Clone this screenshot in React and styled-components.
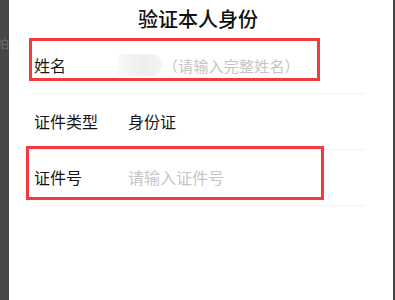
import React from "react";
import styled, { createGlobalStyle } from "styled-components";

const Global = createGlobalStyle`
  html, body { margin: 0; padding: 0; background: #474747; }
  * { box-sizing: border-box; }
  body { font-family: "Noto Sans CJK SC", "Noto Sans", sans-serif; }
`;

const Page = styled.div`
  position: relative;
  display: flex;
  width: 395px;
  height: 300px;
  overflow: hidden;
  background: #474747;
`;

const SideStrip = styled.div`
  width: 9px;
  flex: none;
  overflow: hidden;
  display: flex;
  justify-content: flex-end;
  padding-top: 37px;
`;

const GhostText = styled.span`
  font-size: 12px;
  line-height: 14px;
  color: #6c6c6c;
  white-space: nowrap;
`;

const Panel = styled.div`
  flex: none;
  width: 384px;
  background: #ffffff;
  padding: 0 28px 0 25px;
  display: flex;
  flex-direction: column;
`;

const RightStrip = styled.div`
  flex: 1;
`;

const Title = styled.h1`
  margin: 0;
  height: 38px;
  display: flex;
  align-items: center;
  justify-content: center;
  padding: 0 3px 1px 0;
  font-size: 20px;
  font-weight: 500;
  color: #111111;
  line-height: 1;
`;

const Row = styled.div`
  height: 56px;
  display: flex;
  align-items: center;
  padding-bottom: 1px;
  border-bottom: 1px solid #f1f1f1;
`;

const Label = styled.span`
  flex: none;
  width: ${(p) => p.$width}px;
  font-size: 16px;
  color: #161616;
  line-height: 1;
`;

const Value = styled.span`
  font-size: 16px;
  color: ${(p) => (p.$placeholder ? "#c6c6c6" : "#161616")};
  line-height: 1;
`;

const Hint = styled.span`
  font-size: 15px;
  letter-spacing: 0.2px;
  color: #c4c4c4;
  line-height: 1;
`;

const Blur = styled.span`
  flex: none;
  width: 45px;
  height: 22px;
  margin-right: 1px;
  border-radius: 2px 11px 11px 2px;
  background: linear-gradient(90deg, #fbfbfb 0%, #f3f3f3 30%, #eeeeee 60%, #f4f4f4 100%);
`;

const Mark = styled.div`
  position: absolute;
  border: 3px solid #f23a3f;
  left: ${(p) => p.$x}px;
  top: ${(p) => p.$y}px;
  width: ${(p) => p.$w}px;
  height: ${(p) => p.$h}px;
  pointer-events: none;
`;

export default function App() {
  return (
    <>
      <Global />
      <Page>
        <SideStrip>
          <GhostText>拍</GhostText>
        </SideStrip>
        <Panel>
          <Title>验证本人身份</Title>
          <Row>
            <Label $width={83}>姓名</Label>
            <Blur />
            <Hint>（请输入完整姓名）</Hint>
          </Row>
          <Row>
            <Label $width={94}>证件类型</Label>
            <Value>身份证</Value>
          </Row>
          <Row>
            <Label $width={94}>证件号</Label>
            <Value $placeholder>请输入证件号</Value>
          </Row>
        </Panel>
        <RightStrip />
        <Mark $x={29} $y={38} $w={291} $h={43} />
        <Mark $x={26} $y={146} $w={298} $h={54} />
      </Page>
    </>
  );
}
